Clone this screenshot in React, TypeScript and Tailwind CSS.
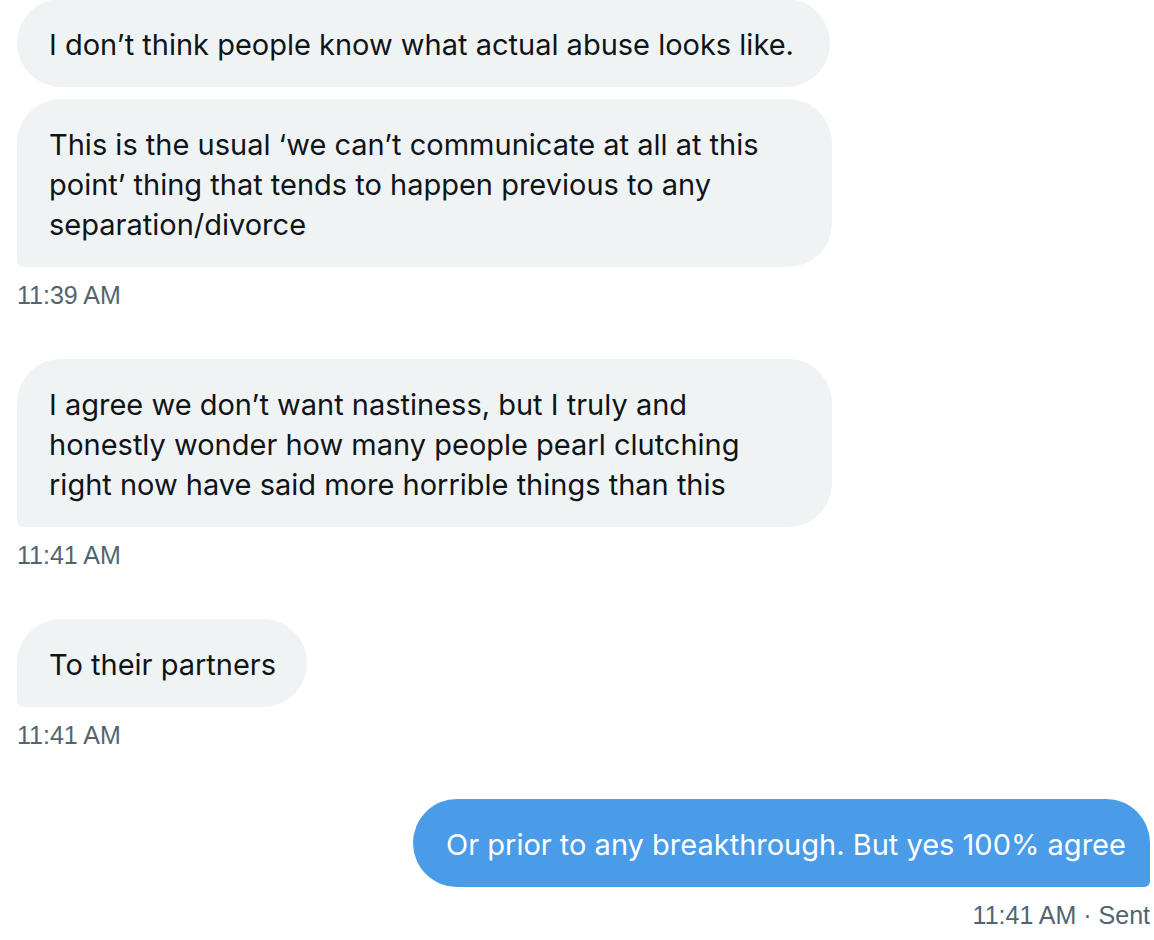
import React from 'react';

const received = [
  {
    groups: [
      { id: 1, w: 'w-[813px]', lines: ['I don’t think people know what actual abuse looks like.'], last: false },
      {
        id: 2,
        w: 'w-[815px]',
        lines: [
          'This is the usual ‘we can’t communicate at all at this',
          'point’ thing that tends to happen previous to any',
          'separation/divorce',
        ],
        last: true,
      },
    ],
    time: '11:39 AM',
  },
  {
    groups: [
      {
        id: 3,
        w: 'w-[815px]',
        lines: [
          'I agree we don’t want nastiness, but I truly and',
          'honestly wonder how many people pearl clutching',
          'right now have said more horrible things than this',
        ],
        last: true,
      },
    ],
    time: '11:41 AM',
  },
  {
    groups: [{ id: 4, w: 'w-[290px]', lines: ['To their partners'], last: true }],
    time: '11:41 AM',
  },
];

const font = { fontFamily: 'Inter, "Noto Sans", sans-serif' };
const stamp = { fontFamily: '"Liberation Sans", Arial, sans-serif' };

export default function App() {
  return (
    <div className="w-[1154px] h-[940px] bg-white overflow-hidden flex flex-col pl-[17px] pr-[4px] -mt-px" style={font}>
      {received.map((block, bi) => (
        <div key={bi} className="flex flex-col mb-[48px]">
          <div className="flex flex-col gap-[12px]">
            {block.groups.map((m) => (
              <div
                key={m.id}
                className={`${m.w} bg-[#eff3f4] text-[#0f1419] text-[29px] leading-[40px] px-[32px] pt-[26px] pb-[22px] rounded-[44px] ${
                  m.last ? 'rounded-bl-[6px]' : ''
                }`}
              >
                {m.lines.map((l, i) => (
                  <div key={i} className="whitespace-nowrap">
                    {l}
                  </div>
                ))}
              </div>
            ))}
          </div>
          <div className="mt-[12px] text-[25px] leading-[32px] text-[#536471]" style={stamp}>
            {block.time}
          </div>
        </div>
      ))}

      <div className="flex flex-col items-end">
        <div className="w-[737px] bg-[#4a9be8] text-white text-[29px] leading-[40px] px-[33px] pt-[26px] pb-[22px] rounded-[44px] rounded-br-[6px] whitespace-nowrap">
          Or prior to any breakthrough. But yes 100% agree
        </div>
        <div className="mt-[12px] text-[25px] leading-[32px] text-[#536471]" style={stamp}>
          11:41 AM · Sent
        </div>
      </div>
    </div>
  );
}
